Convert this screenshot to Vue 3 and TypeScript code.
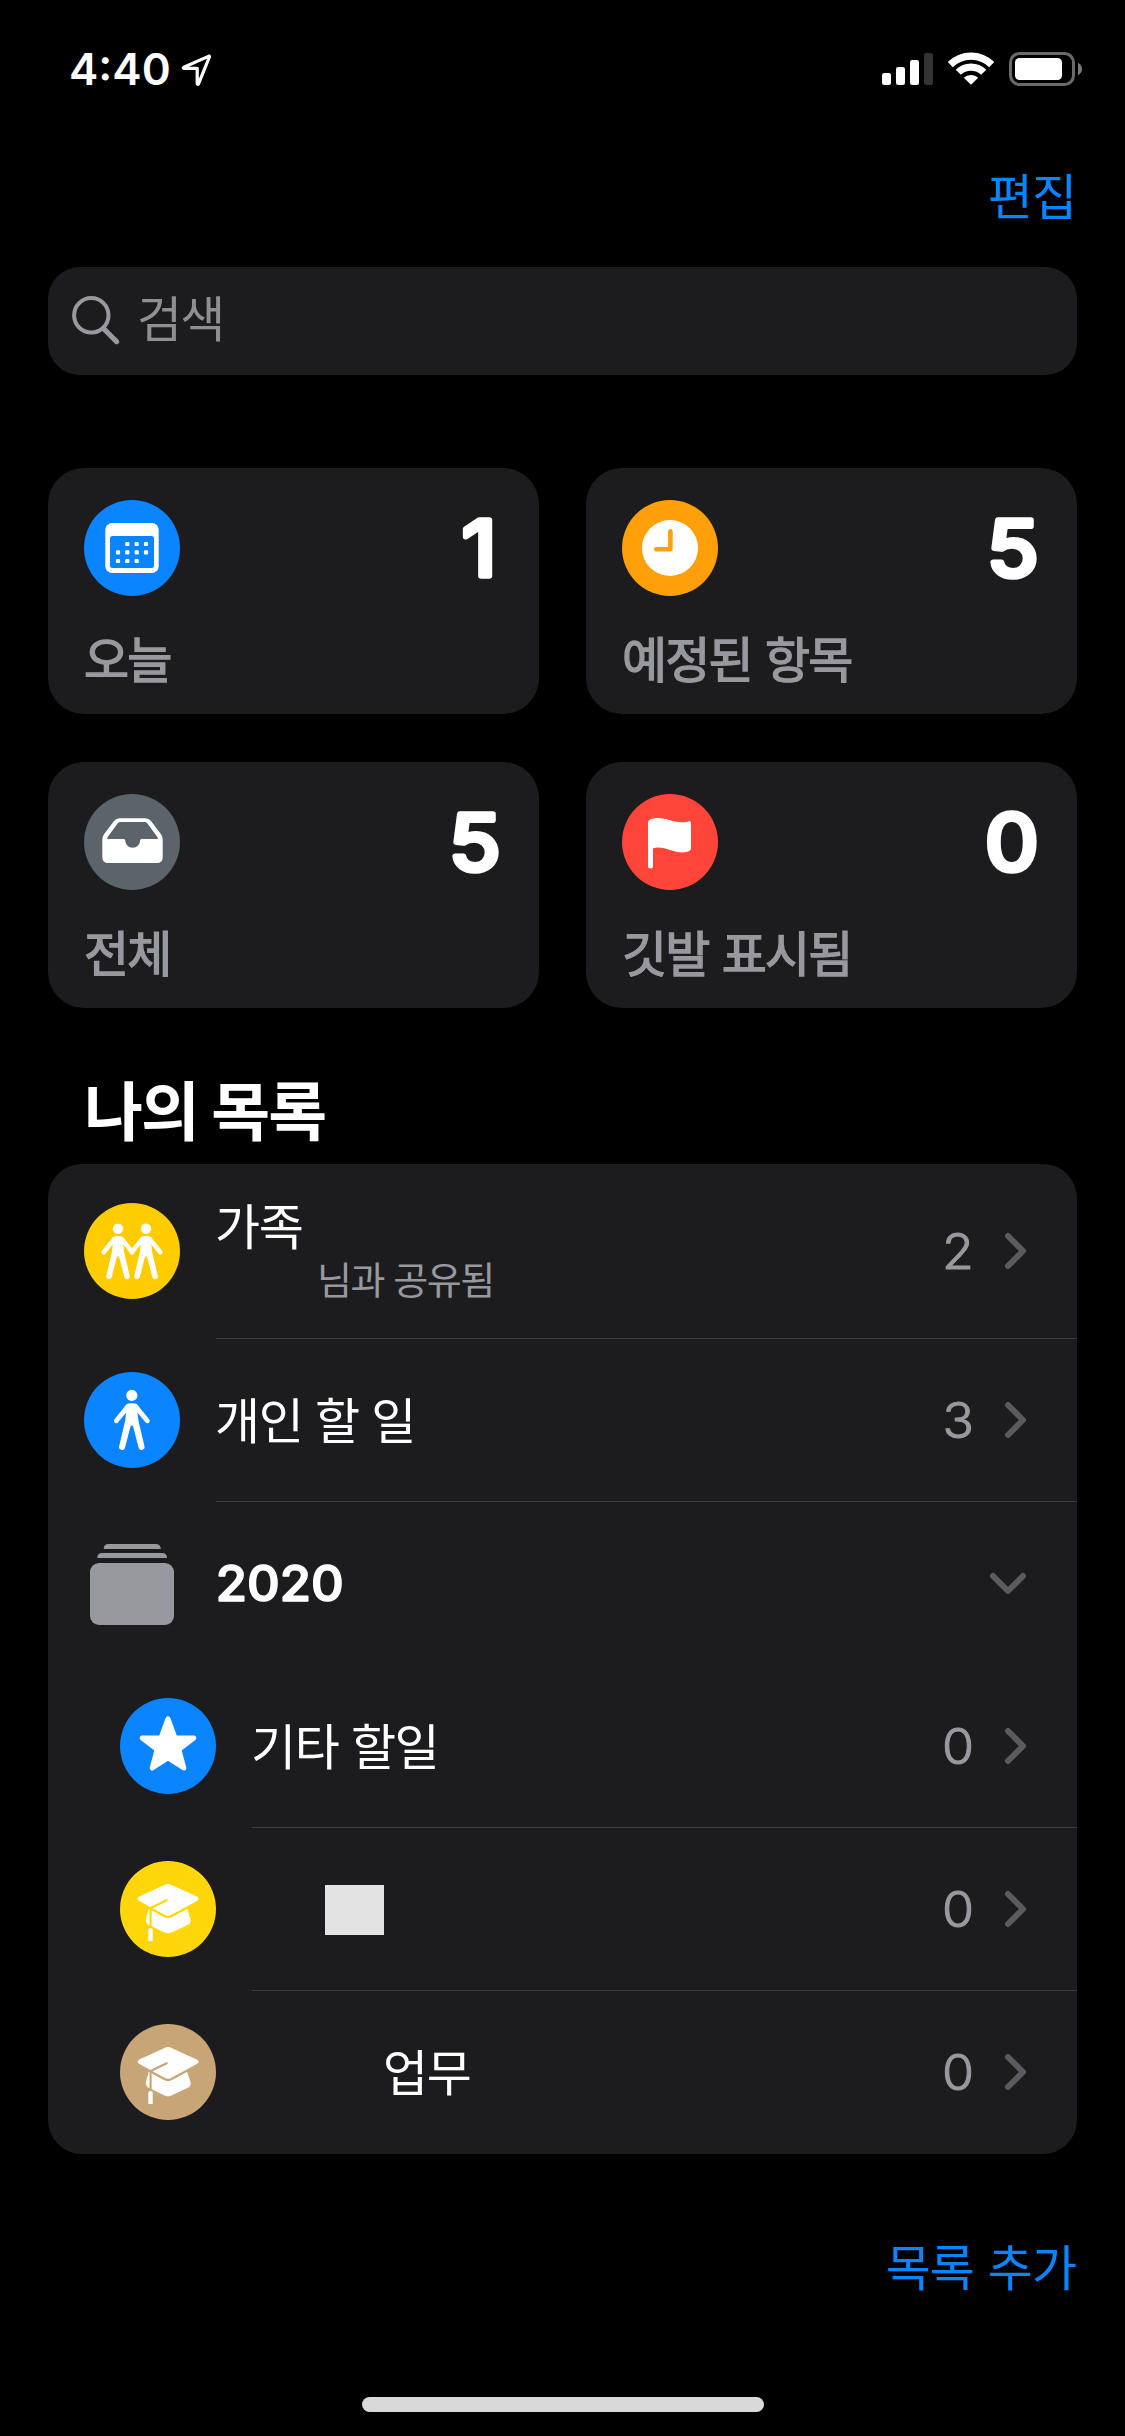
<script setup lang="ts">
type IconName = 'calendar' | 'clock' | 'tray' | 'flag' | 'pair' | 'person' | 'star' | 'cap'

interface SmartList {
  icon: IconName
  color: string
  label: string
  count: number
}

interface ListRow {
  icon: IconName | 'group'
  color: string
  title: string
  note?: string
  count?: number
  nested?: boolean
  divider?: boolean
  block?: boolean
  offset?: boolean
}

const smartLists: SmartList[] = [
  { icon: 'calendar', color: '#0a84ff', label: '오늘', count: 1 },
  { icon: 'clock', color: '#ff9f0a', label: '예정된 항목', count: 5 },
  { icon: 'tray', color: '#5b636b', label: '전체', count: 5 },
  { icon: 'flag', color: '#ff453a', label: '깃발 표시됨', count: 0 },
]

const rows: ListRow[] = [
  { icon: 'pair', color: '#ffcc00', title: '가족', note: '님과 공유됨', count: 2, divider: true },
  { icon: 'person', color: '#0a84ff', title: '개인 할 일', count: 3, divider: true },
  { icon: 'group', color: 'transparent', title: '2020' },
  { icon: 'star', color: '#0a84ff', title: '기타 할일', count: 0, nested: true, divider: true },
  { icon: 'cap', color: '#ffd60a', title: '', count: 0, nested: true, divider: true, block: true },
  { icon: 'cap', color: '#c8a576', title: '업무', count: 0, nested: true, offset: true },
]

const dots: [number, number][] = [
  [43.3, 44], [52.7, 44], [62, 44],
  [34, 52.3], [43.3, 52.3], [52.7, 52.3], [62, 52.3],
  [34, 61], [43.3, 61], [52.7, 61],
]
</script>

<template>
  <div class="screen">
    <svg class="defs" width="0" height="0" aria-hidden="true">
      <defs>
        <g id="i-calendar">
          <path fill-rule="evenodd" d="M28 23H68a6.7 6.7 0 0 1 6.7 6.7V66.3A6.7 6.7 0 0 1 68 73H28a6.7 6.7 0 0 1-6.7-6.7V29.7A6.7 6.7 0 0 1 28 23ZM28.5 36a2.5 2.5 0 0 0-2.5 2.5V65.5a2.5 2.5 0 0 0 2.5 2.5H67.5a2.5 2.5 0 0 0 2.5-2.5V38.5a2.5 2.5 0 0 0-2.5-2.5Z" />
          <rect v-for="(d, i) in dots" :key="i" :x="d[0] - 2.1" :y="d[1] - 2.1" width="4.2" height="4.2" rx="1.2" />
        </g>
        <g id="i-clock">
          <circle cx="48" cy="48" r="28" />
          <path d="M48.4 31.3V49.3H34.2" fill="none" stroke="currentColor" stroke-width="4.6" stroke-linecap="round" stroke-linejoin="round" />
        </g>
        <path id="i-tray" fill-rule="evenodd" d="M18.3 46Q18.3 42.6 20 40.3L30 27Q32 24.3 35.5 24.3H61.5Q65 24.3 67 27L77 40.3Q78.7 42.6 78.7 46V63Q78.7 69 72.7 69H24.3Q18.3 69 18.3 63ZM23.3 43.6L33.6 29.4Q34.7 28 36.5 28H60.5Q62.3 28 63.4 29.4L73.7 43.6Q74.4 45 73 45H57.5Q56 45 56 46.5C56 50.5 53 53.7 48.6 53.7C44.4 53.7 41.3 50.5 41.3 46.5Q41.3 45 39.8 45H24Q22.6 45 23.3 43.6Z" />
        <path id="i-flag" d="M26 29Q26 26.3 28.6 25.2C30.8 24.3 33.5 24 36 24C44 24 52 28.3 60 28.3C63.5 28.3 65.3 27.9 66.8 27.3Q69 26.6 69 29V54Q69 56.6 66 57.6C64 58.3 62 58.5 60 58.5C52 58.5 44 53.6 36 53.6C34 53.6 32.4 53.9 31 54.5V72a2.5 2.5 0 0 1-5 0Z" />
        <g id="i-person">
          <circle cx="47.8" cy="23.4" r="5.6" />
          <path d="M44 34.4L32.3 48.8M51.6 34.4L63.3 48.8" fill="none" stroke="#fff" stroke-width="4.8" stroke-linecap="round" />
          <path d="M40.6 34.6Q43 31.2 46.5 31.2H49.1Q52.6 31.2 55 34.6L53.3 39L54.4 48.5L60.4 74A3 3 0 0 1 54.6 75.7L49.2 54.8Q47.8 52 46.4 54.8L41 75.7A3 3 0 0 1 35.2 74L41.2 48.5L42.3 39Z" />
        </g>
        <g id="i-pair">
          <use href="#i-person" transform="translate(-10.2 4.1) scale(.925)" />
          <use href="#i-person" transform="translate(17.8 4.1) scale(.925)" />
        </g>
        <path id="i-star" stroke="#fff" stroke-width="5" stroke-linejoin="round" d="M48 20.8L55 39.8L73.8 40L58.8 51.5L63.8 70L48 59.8L32.2 70L37.2 51.5L22.2 40L41 39.8Z" />
        <g id="i-cap">
          <path d="M29.5 45L66.5 46L70.5 58Q71.3 62 68 63.7L51.5 71.6Q48 73.2 44.5 71.6L28.2 63.4Q25.2 61.5 26 57.5Z" />
          <path d="M44.5 24Q48 22.2 51.5 24L76.3 35.3Q81 37.8 76.3 40.3L51.5 53.7Q48 55.6 44.5 53.7L19.8 40.3Q15.3 37.8 19.8 35.3Z" stroke="currentColor" stroke-width="4.6" />
          <path d="M44.5 24Q48 22.2 51.5 24L76.3 35.3Q81 37.8 76.3 40.3L51.5 53.7Q48 55.6 44.5 53.7L19.8 40.3Q15.3 37.8 19.8 35.3Z" />
          <path d="M46.8 39.3L30.6 47V66" fill="none" stroke="currentColor" stroke-width="2.1" stroke-linecap="round" stroke-linejoin="round" />
          <path d="M28.3 80V69.3a2.2 2.2 0 0 1 4.4 0V80Z" />
        </g>
        <g id="i-group" fill="#98989f">
          <path d="M19.7 14Q19.7 9 24.7 9H71.7Q76.7 9 76.7 14ZM13.3 23Q13.3 18 18.3 18H78Q83 18 83 23Z" />
          <rect x="6" y="28" width="84" height="62" rx="9" />
        </g>
      </defs>
    </svg>

    <header class="status">
      <span class="time">4:40</span>
      <svg class="locate" width="32" height="34" viewBox="0 0 32 34">
        <path d="M28.9 3.1L3.8 14.2Q2.6 15.1 4 15.3H17.2V30.6Q17.6 32.4 18.6 30.6L29.4 4Q29.7 2.8 28.9 3.1Z" fill="none" stroke="#fff" stroke-width="3.2" stroke-linejoin="round" />
      </svg>
      <svg class="indicators" width="202" height="36" viewBox="881 51 202 36">
        <g fill="#fff">
          <rect x="882" y="73" width="9" height="12" rx="2.2" />
          <rect x="896" y="67" width="9" height="18" rx="2.2" />
          <rect x="910" y="60" width="9" height="25" rx="2.2" />
          <rect x="924" y="53" width="9" height="32" rx="2.2" fill="#333" />
          <path d="M971 84.8L963.8 77.8Q966.5 75 971 75T978.2 77.8Z" />
        </g>
        <g fill="none" stroke="#fff" stroke-width="7.2">
          <path d="M950.3 64.6A29.3 29.3 0 0 1 991.7 64.6" />
          <path d="M958.3 72.3A18 18 0 0 1 983.7 72.3" />
        </g>
        <rect x="1010.5" y="53.5" width="63" height="31" rx="9" fill="none" stroke="#6a6a6a" stroke-width="3" />
        <rect x="1015" y="58" width="47" height="22" rx="4.5" fill="#fff" />
        <path d="M1078 62.7Q1082 65 1082 69T1078 75.3Z" fill="#7a7a7a" />
      </svg>
    </header>

    <nav class="toolbar"><span class="text link">편집</span></nav>

    <div class="search">
      <svg width="50" height="50" viewBox="71 295 50 50" fill="none" stroke="#98989f" stroke-linecap="round">
        <circle cx="91.3" cy="315.3" r="17.2" stroke-width="4" />
        <path d="M104 329L116.6 341.6" stroke-width="5.2" />
      </svg>
      <span class="text">검색</span>
    </div>

    <section class="cards">
      <article v-for="card in smartLists" :key="card.label" class="card">
        <div class="card-top">
          <svg class="badge" viewBox="0 0 96 96" :style="{ background: card.color, color: card.color }">
            <use :href="'#i-' + card.icon" fill="#fff" />
          </svg>
          <svg class="total" width="80" height="96" viewBox="0 0 80 96">
            <text :transform="`translate(${card.count === 1 ? 73.5 : 77.5} 75.5) scale(1.11 1)`" text-anchor="end">{{ card.count }}</text>
          </svg>
        </div>
        <div class="text label">{{ card.label }}</div>
      </article>
    </section>

    <h1 class="heading">나의 목록</h1>

    <section class="list">
      <div v-for="(row, i) in rows" :key="i" class="row" :class="{ nested: row.nested, shared: row.note }">
        <svg class="badge" :class="{ plain: row.icon === 'group' }" viewBox="0 0 96 96" :style="{ background: row.color, color: row.color }">
          <use :href="'#i-' + row.icon" fill="#fff" />
        </svg>
        <div class="body" :class="{ divided: row.divider }">
          <div class="names">
            <span v-if="row.block" class="block"></span>
            <svg v-else-if="row.icon === 'group'" class="year" width="140" height="60" viewBox="0 0 140 60">
              <text transform="translate(-0.3 47.2) scale(1.035 1)">{{ row.title }}</text>
            </svg>
            <span v-else class="text title" :class="{ offset: row.offset }">{{ row.title }}</span>
            <span v-if="row.note" class="note">{{ row.note }}</span>
          </div>
          <svg v-if="row.count !== undefined" class="count" width="50" height="60" viewBox="0 0 50 60">
            <text transform="translate(49 46.8) scale(1.06 1)" text-anchor="end">{{ row.count }}</text>
          </svg>
          <svg class="chevron" width="38" height="38" viewBox="0 0 38 38">
            <path :d="row.icon === 'group' ? 'M4 12L19 27L34 12' : 'M19 4L34 19L19 34'" />
          </svg>
        </div>
      </div>
    </section>

    <footer class="footer"><span class="text link">목록 추가</span></footer>
    <div class="home"></div>
  </div>
</template>

<style>
body {
  margin: 0;
  background: #000;
}
</style>

<style scoped>
.screen {
  box-sizing: border-box;
  display: flex;
  flex-direction: column;
  width: 1125px;
  height: 2436px;
  padding: 0 48px;
  overflow: hidden;
  background: #000;
  color: #fff;
  font-family: 'Noto Sans CJK KR', sans-serif;
}
.screen > * {
  flex-shrink: 0;
}
.defs {
  display: block;
  height: 0;
}
.status {
  display: flex;
  align-items: flex-start;
  height: 113px;
  padding-top: 51px;
  box-sizing: border-box;
}
.time {
  width: 112px;
  padding-left: 21px;
  font: 600 44px/36px Inter, sans-serif;
}
.locate {
  margin-top: 2px;
  margin-left: -1px;
}
.indicators {
  margin-left: auto;
  margin-right: -6px;
}
.text {
  display: block;
  font-size: 49px;
  line-height: 60px;
  letter-spacing: -1.8px;
  word-spacing: 4px;
  white-space: pre;
}
.link {
  margin-right: 1px;
  color: #0a84ff;
  letter-spacing: -1px;
}
.toolbar {
  display: flex;
  justify-content: flex-end;
  height: 103px;
  padding-top: 51px;
  box-sizing: border-box;
}
.search {
  display: flex;
  align-items: flex-start;
  box-sizing: border-box;
  height: 108px;
  margin-top: 51px;
  padding: 19px 0 0 23px;
  border-radius: 32px;
  background: #1c1c1e;
  color: #8e8e93;
}
.search svg {
  margin-top: 9px;
}
.search .text {
  margin-left: 16px;
}
.cards {
  display: grid;
  grid-template-columns: 491px 491px;
  gap: 48px 47px;
  margin-top: 93px;
}
.card {
  box-sizing: border-box;
  height: 246px;
  padding: 32px 36px 0;
  border-radius: 36px;
  background: #1c1c1e;
}
.card-top {
  display: flex;
  justify-content: space-between;
}
.badge {
  display: block;
  flex: none;
  width: 96px;
  height: 96px;
  border-radius: 50%;
}
.badge.plain {
  border-radius: 0;
}
.total text {
  font: 400 76.5px Inter, sans-serif;
  fill: #fff;
  stroke: #fff;
  stroke-width: 5.6px;
  stroke-linejoin: round;
}
.label {
  margin-top: 31px;
  color: #98989f;
  -webkit-text-stroke: 1.4px #98989f;
}
.heading {
  margin: 59px 0 17px 36px;
  font-size: 64px;
  line-height: 80px;
  letter-spacing: -2px;
  word-spacing: 1px;
  font-weight: 700;
}
.list {
  border-radius: 34px;
  background: #1c1c1e;
  overflow: hidden;
}
.row {
  display: flex;
  align-items: center;
  height: 163px;
  padding-left: 36px;
}
.row .badge {
  margin-bottom: 1px;
}
.row.shared {
  height: 175px;
}
.row.nested {
  padding-left: 72px;
}
.body {
  display: flex;
  flex: 1;
  align-items: center;
  align-self: stretch;
  margin-left: 36px;
  padding-right: 50px;
  box-sizing: border-box;
}
.body.divided {
  box-shadow: inset 0 -1px #3d3d41;
}
.names {
  display: flex;
  flex: 1;
  flex-direction: column;
}
.title {
  margin: 0 0 5px -1px;
  letter-spacing: -1.4px;
  word-spacing: 3px;
}
.shared .title {
  margin-bottom: 1px;
}
.shared .names {
  align-self: flex-start;
  padding-top: 30px;
}
.note {
  padding-left: 101px;
  color: #98989f;
  font-size: 38px;
  line-height: 46px;
  letter-spacing: -1.4px;
  word-spacing: 2px;
}
.block {
  width: 59px;
  height: 50px;
  margin-left: 73px;
  background: #e3e3e3;
}
.offset {
  padding-left: 132px;
}
.year text {
  font: 500 49px Inter, sans-serif;
  fill: #fff;
  stroke: #fff;
  stroke-width: 1.6px;
  stroke-linejoin: round;
}
.count text {
  font: 300 49px Inter, sans-serif;
  fill: #98989f;
  stroke: #98989f;
  stroke-width: 1px;
  stroke-linejoin: round;
}
.chevron {
  margin: 0 0 2px 14px;
}
.chevron path {
  fill: none;
  stroke: #5a5a5f;
  stroke-width: 6px;
  stroke-linecap: round;
  stroke-linejoin: round;
}
.footer {
  display: flex;
  justify-content: flex-end;
  margin-top: 81px;
}
.home {
  width: 402px;
  height: 15px;
  margin: 102px 0 0 314px;
  border-radius: 8px;
  background: #d9d9d9;
}
</style>
